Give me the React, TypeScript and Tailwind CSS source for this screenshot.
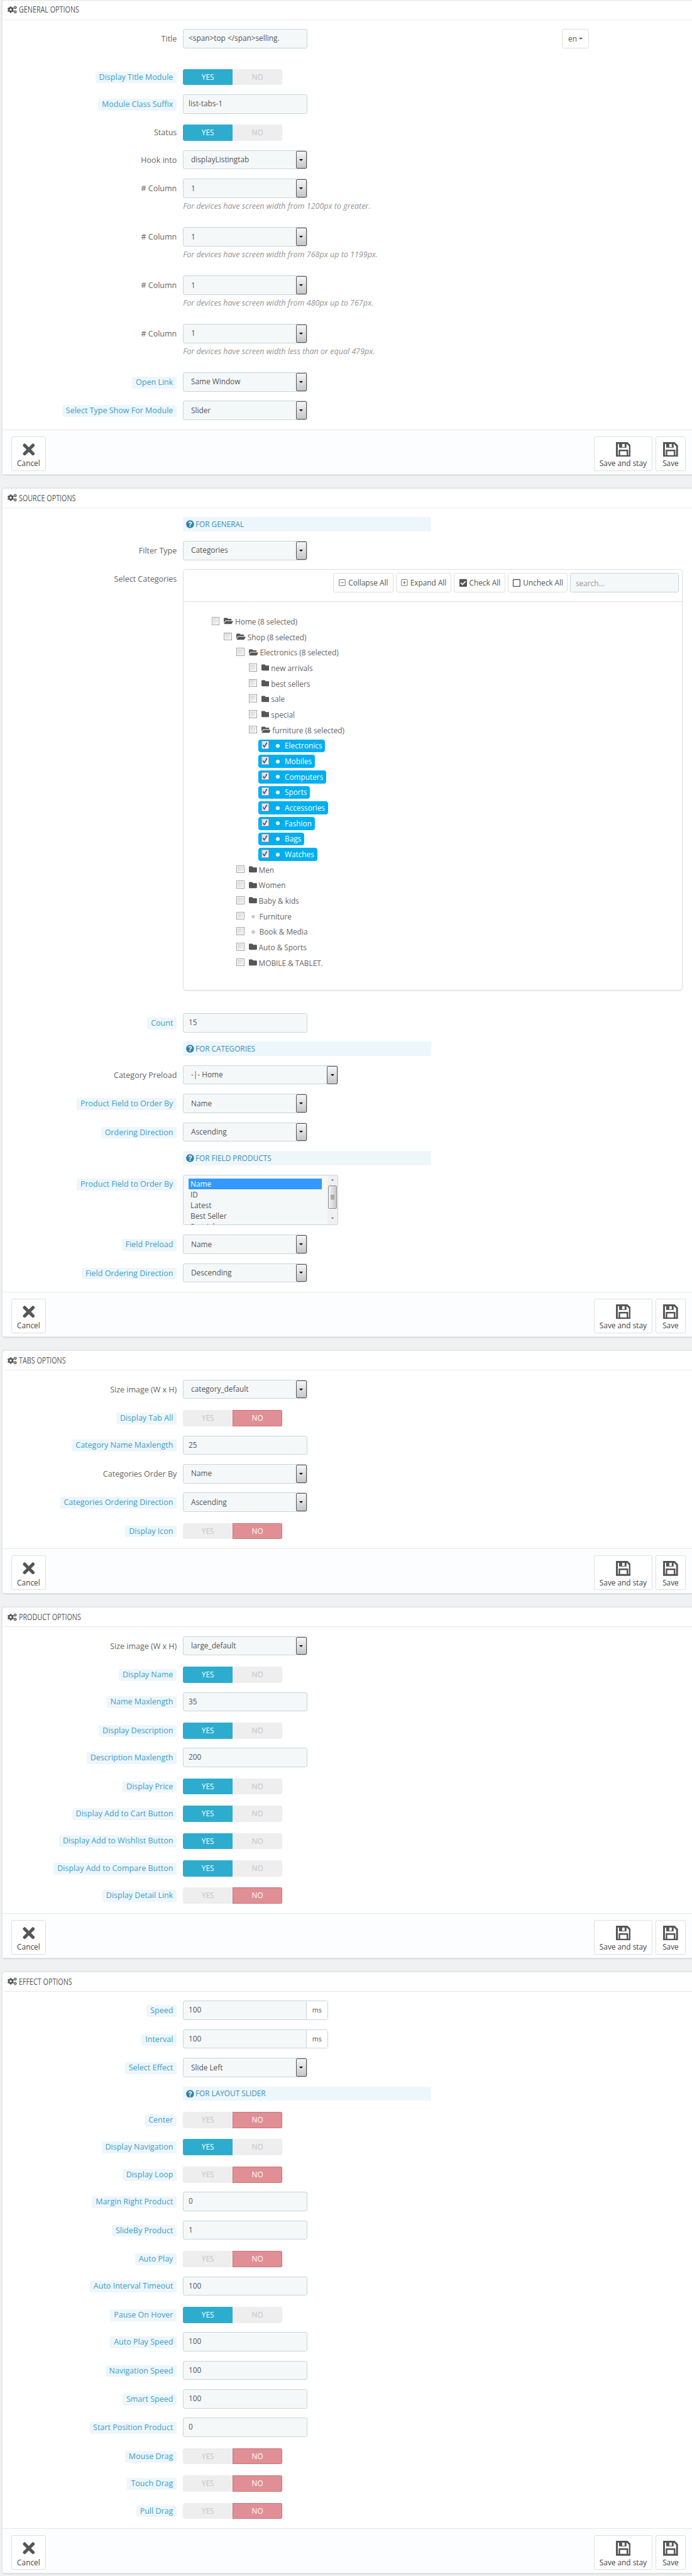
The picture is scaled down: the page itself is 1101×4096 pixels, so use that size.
import type { ReactNode } from "react";
import { FaCheckSquare, FaCogs, FaFolder, FaFolderOpen, FaQuestionCircle, FaRegSquare, FaTimes } from "react-icons/fa";
import { SquareMinus, SquarePlus } from "lucide-react";

interface RowProps {
  label?: string;
  tip?: boolean;
  className?: string;
  children: ReactNode;
}

function Row({ label, tip, className = "mb-[15px]", children }: RowProps) {
  return (
    <div className={`flex items-start ${className}`}>
      <div className="flex w-[281px] shrink-0 justify-end pt-[7px]">
        {label && tip && (
          <span className="h-[19px] rounded-[3px] bg-[#eef6fb] px-[6px] text-[12.7px] leading-[19px] text-[#3a9fc9]">
            {label}
          </span>
        )}
        {label && !tip && <span className="text-[12.7px] leading-[19px] text-[#666]">{label}</span>}
      </div>
      <div className="ml-[10px] min-w-0 flex-1">{children}</div>
    </div>
  );
}

function Input({ value }: { value: string }) {
  return (
    <div className="h-[31px] w-[200px] rounded-[3px] border border-[#c7d6db] bg-[#f5f8f9] px-[8px] text-[12px] leading-[28px] text-[#555]">
      {value}
    </div>
  );
}

function Select({ value, wide }: { value: string; wide?: boolean }) {
  return (
    <div
      className={`flex h-[31px] items-center justify-between rounded-[3px] border border-[#c7d6db] bg-[#f5f8f9] pl-[12px] text-[12px] text-[#555] ${
        wide ? "w-[250px]" : "w-[200px]"
      }`}
    >
      <span>{value}</span>
      <span className="flex h-[29px] w-[17px] items-center justify-center rounded-[2px] border border-[#555] bg-gradient-to-b from-[#f6f6f6] to-[#c6c6c6]">
        <span className="h-0 w-0 border-x-[4px] border-t-[4px] border-x-transparent border-t-black" />
      </span>
    </div>
  );
}

function Toggle({ on }: { on: boolean }) {
  return (
    <div className="mt-[3px] flex h-[26px] w-[160px] overflow-hidden rounded-[3px] text-center text-[12px] leading-[26px]">
      <span className={`w-[80px] ${on ? "bg-[#2eacce] text-white" : "bg-[#eeeeee] text-[#c4c4c4]"}`}>YES</span>
      <span
        className={`w-[80px] ${
          on ? "bg-[#eeeeee] text-[#c4c4c4]" : "border border-[#c9747c] bg-[#e08f95] leading-[24px] text-white"
        }`}
      >
        NO
      </span>
    </div>
  );
}

function Alert({ text }: { text: string }) {
  return (
    <Row>
      <div className="flex h-[23px] w-[400px] items-center bg-[#edf6fb] pl-[5px] text-[12px] text-[#3f8fb5]">
        <FaQuestionCircle size={13} className="mr-[2px] text-[#2f81a8]" />
        {text}
      </div>
    </Row>
  );
}

function Help({ text }: { text: string }) {
  return <p className="mt-[5px] h-[27px] text-[12.7px] leading-[17px] text-[#959595] italic">{text}</p>;
}

function Heading({ title }: { title: string }) {
  return (
    <div className="mx-[3px] flex h-[31px] items-center border-b border-[#e8e8e8] pl-[5px] text-[#555]">
      <FaCogs size={15} className="shrink-0" />
      <span className="ml-[3px] inline-block origin-left scale-x-[0.78] text-[14px] whitespace-nowrap">{title}</span>
    </div>
  );
}

function SaveIcon() {
  return (
    <svg width="24" height="24" viewBox="0 0 24 24" className="text-[#555]">
      <path d="M1.5 1.5H18L22.5 6V22.5H1.5Z" fill="none" stroke="currentColor" strokeWidth="3" />
      <path d="M5 2H17V9H5Z" fill="currentColor" />
      <rect x="10" y="3" width="4" height="5" fill="#fff" />
      <path d="M5.5 22V13.5H18.5V22" fill="none" stroke="currentColor" strokeWidth="2.5" />
    </svg>
  );
}

function FooterButton({ label, icon, className }: { label: string; icon: ReactNode; className: string }) {
  return (
    <div
      className={`flex h-[56px] flex-col items-center rounded-[3px] border border-[#e0e0e0] bg-white pt-[8px] text-[12px] text-[#444] ${className}`}
    >
      <div className="flex h-[24px] items-center justify-center">{icon}</div>
      <span className="mt-[2px] leading-[17px]">{label}</span>
    </div>
  );
}

function Panel({ title, children, last }: { title: string; children: ReactNode; last?: boolean }) {
  return (
    <section
      className={`ml-[3px] -mr-[6px] rounded-[5px] border border-[#e4e4e4] bg-white shadow-[0_1px_2px_rgba(0,0,0,0.12)] ${
        last ? "" : "mb-[21.5px]"
      }`}
    >
      <Heading title={title} />
      <div className="pt-[15px]">{children}</div>
      <div className="flex h-[72px] justify-between border-t border-[#e8e8e8] bg-[#fcfdfe] pt-[10px] pr-[15px] pl-[14px]">
        <FooterButton label="Cancel" className="w-[56px]" icon={<FaTimes size={28} className="text-[#555]" />} />
        <div className="flex gap-[5px]">
          <FooterButton label="Save and stay" className="w-[95px]" icon={<SaveIcon />} />
          <FooterButton label="Save" className="w-[48px]" icon={<SaveIcon />} />
        </div>
      </div>
    </section>
  );
}

function Box({ checked }: { checked?: boolean }) {
  return (
    <span className="mt-[-3px] flex h-[13px] w-[13px] shrink-0 items-center justify-center border border-[#a3a3a3] bg-white">
      <span className="block h-[9px] w-[9px] bg-gradient-to-br from-[#d8d8d8] to-[#f4f4f4]">
        {checked && (
          <svg viewBox="0 0 9 9" className="block h-[9px] w-[9px]">
            <path d="M1.5 4.5L3.5 8L8 0.5" fill="none" stroke="#3b4d8f" strokeWidth="1.6" />
          </svg>
        )}
      </span>
    </span>
  );
}

interface TreeNode {
  name: string;
  kind: "open" | "closed" | "leaf" | "picked";
  children?: TreeNode[];
}

const picked = ["Electronics", "Mobiles", "Computers", "Sports", "Accessories", "Fashion", "Bags", "Watches"];

const tree: TreeNode = {
  name: "Home (8 selected)",
  kind: "open",
  children: [
    {
      name: "Shop (8 selected)",
      kind: "open",
      children: [
        {
          name: "Electronics (8 selected)",
          kind: "open",
          children: [
            { name: "new arrivals", kind: "closed" },
            { name: "best sellers", kind: "closed" },
            { name: "sale", kind: "closed" },
            { name: "special", kind: "closed" },
            {
              name: "furniture (8 selected)",
              kind: "open",
              children: picked.map((name) => ({ name, kind: "picked" as const })),
            },
          ],
        },
        { name: "Men", kind: "closed" },
        { name: "Women", kind: "closed" },
        { name: "Baby & kids", kind: "closed" },
        { name: "Furniture", kind: "leaf" },
        { name: "Book & Media", kind: "leaf" },
        { name: "Auto & Sports", kind: "closed" },
        { name: "MOBILE & TABLET.", kind: "closed" },
      ],
    },
  ],
};

function TreeItem({ node }: { node: TreeNode }) {
  return (
    <li>
      {node.kind === "picked" ? (
        <div className="flex h-[25px] items-center">
          <div className="-ml-[5px] flex h-[21px] items-center rounded-[4px] bg-[#00aff0] pr-[5px] pl-[5px] text-[12px] text-white">
            <Box checked />
            <span className="ml-[11px] h-[6px] w-[6px] rounded-full bg-white" />
            <span className="ml-[8px]">{node.name}</span>
          </div>
        </div>
      ) : (
        <div className="flex h-[25px] items-center text-[12px] text-[#666]">
          <Box />
          {node.kind === "open" && <FaFolderOpen size={15} className="mt-[-2px] ml-[7px] shrink-0 text-[#555]" />}
          {node.kind === "closed" && <FaFolder size={13} className="mt-[-2px] ml-[7px] shrink-0 text-[#555]" />}
          {node.kind === "leaf" && <span className="ml-[11px] h-[6px] w-[6px] rounded-full bg-[#cccccc]" />}
          <span className={node.kind === "leaf" ? "ml-[7px]" : "ml-[3px]"}>{node.name}</span>
        </div>
      )}
      {node.children && (
        <ul className="pl-[20px]">
          {node.children.map((child) => (
            <TreeItem key={child.name} node={child} />
          ))}
        </ul>
      )}
    </li>
  );
}

function ToolButton({ icon, label, className }: { icon: ReactNode; label: string; className: string }) {
  return (
    <div
      className={`flex h-[31px] items-center justify-center gap-[3px] rounded-[3px] border border-[#e0e0e0] bg-white text-[12px] whitespace-nowrap text-[#555] ${className}`}
    >
      {icon}
      {label}
    </div>
  );
}

function CategoryTree() {
  return (
    <Row label="Select Categories" className="mb-[37px]">
      <div className="mr-[20px] h-[678px] rounded-[5px] border border-[#e0e0e0] bg-white shadow-[0_1px_1px_rgba(0,0,0,0.08)]">
        <div className="flex h-[51px] items-start justify-end gap-[4px] border-b border-[#e0e0e0] pt-[5px] pr-[5px]">
          <ToolButton label="Collapse All" className="w-[97px]" icon={<SquareMinus size={13} strokeWidth={1.5} />} />
          <ToolButton label="Expand All" className="w-[89px]" icon={<SquarePlus size={13} strokeWidth={1.5} />} />
          <ToolButton label="Check All" className="w-[84px]" icon={<FaCheckSquare size={14} />} />
          <ToolButton label="Uncheck All" className="w-[96px]" icon={<FaRegSquare size={14} />} />
          <div className="h-[31px] w-[175px] rounded-[3px] border border-[#c7d6db] bg-[#f5f8f9] pl-[8px] text-[12px] leading-[31px] text-[#999]">
            search...
          </div>
        </div>
        <ul className="pt-[20px] pl-[45px]">
          <TreeItem node={tree} />
        </ul>
      </div>
    </Row>
  );
}

function ListBox() {
  return (
    <div className="flex h-[82px] w-[250px] overflow-hidden rounded-[3px] border border-[#c7d6db] bg-[#f5f8f9] text-[12px] leading-[17px] text-[#555]">
      <div className="flex-1 pt-[6px] pl-[8px]">
        <div className="mr-[9px] bg-[#3399ff] pl-[3px] text-white">Name</div>
        {["ID", "Latest", "Best Seller", "Special"].map((item) => (
          <div key={item} className="pl-[3px]">
            {item}
          </div>
        ))}
      </div>
      <div className="flex w-[16px] flex-col items-center bg-[#f0f0f0]">
        <span className="mt-[7px] h-0 w-0 border-x-[3px] border-b-[3px] border-x-transparent border-b-[#444]" />
        <span className="mt-[8px] flex h-[37px] w-[15px] flex-col items-center justify-center gap-[1px] rounded-[2px] border border-[#8e8e8e] bg-gradient-to-r from-[#f2f2f2] to-[#c9c9c9]">
          <span className="h-px w-[7px] bg-[#777]" />
          <span className="h-px w-[7px] bg-[#777]" />
          <span className="h-px w-[7px] bg-[#777]" />
          <span className="h-px w-[7px] bg-[#777]" />
        </span>
        <span className="mt-[14px] h-0 w-0 border-x-[3px] border-t-[3px] border-x-transparent border-t-[#444]" />
      </div>
    </div>
  );
}

function Addon({ value }: { value: string }) {
  return (
    <div className="flex h-[31px] w-[234px] rounded-[3px] border border-[#c7d6db] bg-[#f5f8f9] text-[12px] leading-[28px] text-[#555]">
      <span className="w-[198px] border-r border-[#c7d6db] pl-[8px]">{value}</span>
      <span className="flex-1 bg-white text-center text-[11px]">ms</span>
    </div>
  );
}

export default function App() {
  return (
    <div className="min-h-screen w-full overflow-hidden bg-[#eff1f2]">
      <div className="w-[1115px] font-['Open_Sans',sans-serif] [zoom:0.987]">
        <Panel title="GENERAL OPTIONS">
          <Row label="Title" className="mb-[30px]">
            <div className="flex">
              <Input value="<span>top </span>selling." />
              <div className="ml-[411px] flex h-[31px] w-[43px] items-center justify-center gap-[3px] rounded-[3px] border border-[#e0e0e0] text-[12px] text-[#555]">
                en
                <span className="h-0 w-0 border-x-[4px] border-t-[4px] border-x-transparent border-t-[#555]" />
              </div>
            </div>
          </Row>
          <Row label="Display Title Module" tip>
            <Toggle on />
          </Row>
          <Row label="Module Class Suffix" tip>
            <Input value="list-tabs-1" />
          </Row>
          <Row label="Status">
            <Toggle on />
          </Row>
          <Row label="Hook into">
            <Select value="displayListingtab" />
          </Row>
          <Row label="# Column">
            <Select value="1" />
            <Help text="For devices have screen width from 1200px to greater." />
          </Row>
          <Row label="# Column">
            <Select value="1" />
            <Help text="For devices have screen width from 768px up to 1199px." />
          </Row>
          <Row label="# Column">
            <Select value="1" />
            <Help text="For devices have screen width from 480px up to 767px." />
          </Row>
          <Row label="# Column">
            <Select value="1" />
            <Help text="For devices have screen width less than or equal 479px." />
          </Row>
          <Row label="Open Link" tip>
            <Select value="Same Window" />
          </Row>
          <Row label="Select Type Show For Module" tip>
            <Select value="Slider" />
          </Row>
        </Panel>

        <Panel title="SOURCE OPTIONS">
          <Alert text="FOR GENERAL" />
          <Row label="Filter Type">
            <Select value="Categories" />
          </Row>
          <CategoryTree />
          <Row label="Count" tip>
            <Input value="15" />
          </Row>
          <Alert text="FOR CATEGORIES" />
          <Row label="Category Preload">
            <Select value="-|- Home" wide />
          </Row>
          <Row label="Product Field to Order By" tip>
            <Select value="Name" />
          </Row>
          <Row label="Ordering Direction" tip>
            <Select value="Ascending" />
          </Row>
          <Alert text="FOR FIELD PRODUCTS" />
          <Row label="Product Field to Order By" tip>
            <ListBox />
          </Row>
          <Row label="Field Preload" tip>
            <Select value="Name" />
          </Row>
          <Row label="Field Ordering Direction" tip>
            <Select value="Descending" />
          </Row>
        </Panel>

        <Panel title="TABS OPTIONS">
          <Row label="Size image (W x H)">
            <Select value="category_default" />
          </Row>
          <Row label="Display Tab All" tip>
            <Toggle on={false} />
          </Row>
          <Row label="Category Name Maxlength" tip>
            <Input value="25" />
          </Row>
          <Row label="Categories Order By">
            <Select value="Name" />
          </Row>
          <Row label="Categories Ordering Direction" tip>
            <Select value="Ascending" />
          </Row>
          <Row label="Display Icon" tip>
            <Toggle on={false} />
          </Row>
        </Panel>

        <Panel title="PRODUCT OPTIONS">
          <Row label="Size image (W x H)">
            <Select value="large_default" />
          </Row>
          <Row label="Display Name" tip>
            <Toggle on />
          </Row>
          <Row label="Name Maxlength" tip>
            <Input value="35" />
          </Row>
          <Row label="Display Description" tip>
            <Toggle on />
          </Row>
          <Row label="Description Maxlength" tip>
            <Input value="200" />
          </Row>
          <Row label="Display Price" tip>
            <Toggle on />
          </Row>
          <Row label="Display Add to Cart Button" tip>
            <Toggle on />
          </Row>
          <Row label="Display Add to Wishlist Button" tip>
            <Toggle on />
          </Row>
          <Row label="Display Add to Compare Button" tip>
            <Toggle on />
          </Row>
          <Row label="Display Detail Link" tip>
            <Toggle on={false} />
          </Row>
        </Panel>

        <Panel title="EFFECT OPTIONS" last>
          <Row label="Speed" tip>
            <Addon value="100" />
          </Row>
          <Row label="Interval" tip>
            <Addon value="100" />
          </Row>
          <Row label="Select Effect" tip>
            <Select value="Slide Left" />
          </Row>
          <Alert text="FOR LAYOUT SLIDER" />
          <Row label="Center" tip>
            <Toggle on={false} />
          </Row>
          <Row label="Display Navigation" tip>
            <Toggle on />
          </Row>
          <Row label="Display Loop" tip>
            <Toggle on={false} />
          </Row>
          <Row label="Margin Right Product" tip>
            <Input value="0" />
          </Row>
          <Row label="SlideBy Product" tip>
            <Input value="1" />
          </Row>
          <Row label="Auto Play" tip>
            <Toggle on={false} />
          </Row>
          <Row label="Auto Interval Timeout" tip>
            <Input value="100" />
          </Row>
          <Row label="Pause On Hover" tip>
            <Toggle on />
          </Row>
          <Row label="Auto Play Speed" tip>
            <Input value="100" />
          </Row>
          <Row label="Navigation Speed" tip>
            <Input value="100" />
          </Row>
          <Row label="Smart Speed" tip>
            <Input value="100" />
          </Row>
          <Row label="Start Position Product" tip>
            <Input value="0" />
          </Row>
          <Row label="Mouse Drag" tip>
            <Toggle on={false} />
          </Row>
          <Row label="Touch Drag" tip>
            <Toggle on={false} />
          </Row>
          <Row label="Pull Drag" tip>
            <Toggle on={false} />
          </Row>
        </Panel>
      </div>
    </div>
  );
}
